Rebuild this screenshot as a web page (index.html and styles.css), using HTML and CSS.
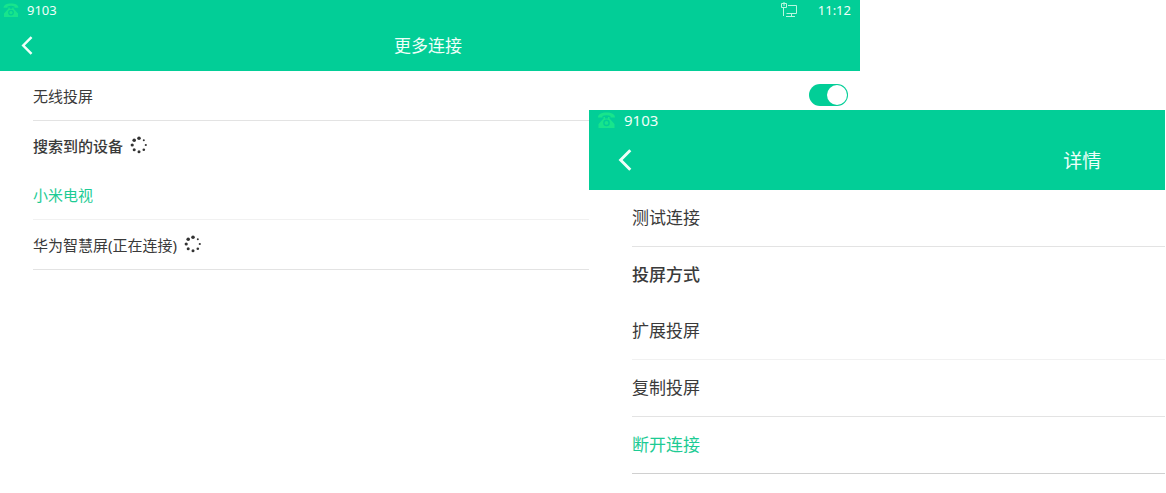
FILE: index.html
```html
<!DOCTYPE html>
<html lang="zh-CN">
<head>
<meta charset="utf-8">
<title>更多连接</title>
<link rel="stylesheet" href="styles.css">
</head>
<body>
<svg class="symbols" aria-hidden="true">
  <symbol id="phone" viewBox="0 0 18 16">
    <path fill="#18e48c" fill-rule="evenodd" d="M0.5 5.5C0.5 2 4 .5 9 .5s8.500 1.500 8.500 5h-4.500V4Q9 2.500 5 4v1.500zM6 5h1.500v1.500h3V5H12v1.500l5 5.500v4H1v-4l5-5.500zM9 7.600a3.300 3.300 0 1 0 0 6.600a3.300 3.300 0 1 0 0-6.600zM9 9a1.900 1.900 0 1 1 0 3.800a1.900 1.900 0 1 1 0-3.800z"/>
  </symbol>
  <symbol id="back" viewBox="0 0 14 22">
    <path fill="none" stroke="#effff9" stroke-width="2.900" d="M12.300 1.200 2.600 11l9.700 9.800"/>
  </symbol>
  <symbol id="spinner" viewBox="0 0 18 18">
    <g fill="#333">
      <circle cx="9" cy="2.200" r="1.800"/><circle cx="4.200" cy="4.200" r="1.800"/>
      <circle cx="2.200" cy="9" r="1.600"/><circle cx="4.200" cy="13.800" r="1.500"/>
      <circle cx="9" cy="15.800" r="1.500"/><circle cx="13.800" cy="13.800" r="1.300"/>
      <circle cx="15.800" cy="9" r="1.100"/><circle cx="13.800" cy="4.200" r="1"/>
    </g>
  </symbol>
</svg>
<main class="stage">
  <section class="screen screen-list">
    <header class="header">
      <div class="status">
        <svg class="phone"><use href="#phone"/></svg>
        <span>9103</span>
        <svg class="network" viewBox="0 0 17 16" fill="none" stroke="#b9f7df">
          <path d="M.5 1.500h5v4h-5zM3 0v4M7 3.500h8.500v8H5.500M2.500 6v8M10.500 11.500v3M5 14.500h9"/>
        </svg>
        <time>11:12</time>
      </div>
      <div class="bar">
        <button class="back" type="button" aria-label="返回"><svg><use href="#back"/></svg></button>
        <h1 class="title">更多连接</h1>
      </div>
    </header>
    <div class="rows">
      <div class="row">
        <label for="cast">无线投屏</label>
        <input class="switch" id="cast" type="checkbox" role="switch" checked>
      </div>
      <h2 class="row heading">搜索到的设备<svg class="spinner"><use href="#spinner"/></svg></h2>
      <button class="row accent light" type="button">小米电视</button>
      <button class="row" type="button">华为智慧屏(正在连接)<svg class="spinner"><use href="#spinner"/></svg></button>
    </div>
  </section>
  <section class="screen screen-detail">
    <header class="header">
      <div class="status">
        <svg class="phone"><use href="#phone"/></svg>
        <span>9103</span>
      </div>
      <div class="bar">
        <button class="back" type="button" aria-label="返回"><svg><use href="#back"/></svg></button>
        <h1 class="title">详情</h1>
      </div>
    </header>
    <div class="rows">
      <button class="row" type="button">测试连接</button>
      <h2 class="row heading">投屏方式</h2>
      <button class="row light" type="button">扩展投屏</button>
      <button class="row" type="button">复制投屏</button>
      <button class="row accent strong" type="button">断开连接</button>
    </div>
  </section>
</main>
</body>
</html>
```
FILE: styles.css
```css
* {
  box-sizing: border-box;
}

body {
  margin: 0;
  background: #fff;
  color: #3a3a3a;
  font-family: "Noto Sans", "Noto Sans CJK SC", sans-serif;
}

button {
  margin: 0;
  padding: 0;
  border: 0;
  background: none;
  color: inherit;
  font: inherit;
  text-align: left;
}

svg {
  display: block;
  flex: none;
}

.symbols {
  display: none;
}

.stage {
  display: grid;
  grid-template-columns: 589fr 271fr 305fr;
  align-items: start;
  padding-right: 1px;
}

.screen {
  grid-row: 1;
  min-width: 0;
  background: #fff;
}

.screen-list {
  grid-column: 1 / 3;
  font-size: 15px;
}

.screen-detail {
  grid-column: 2 / 4;
  margin-top: 110px;
  overflow: hidden;
  font-size: 17px;
}

.header {
  background: #02ce97;
  color: #effff9;
}

.status {
  display: flex;
  align-items: center;
  height: 20px;
  padding: 0 9px 0 3px;
  font-size: 13px;
}

.status .phone {
  width: 16px;
  height: 14px;
  margin-right: 8px;
}

.network {
  width: 17px;
  height: 16px;
  margin: 0 20px 0 auto;
}

.bar {
  display: grid;
  align-items: center;
  height: 51px;
}

.back,
.title {
  grid-area: 1 / 1;
}

.back {
  justify-self: start;
  margin-left: 21px;
}

.back svg {
  width: 12px;
  height: 19px;
}

.title {
  margin: 0;
  padding: 0 4px 2px 0;
  font-size: 17px;
  font-weight: 400;
  text-align: center;
}

.rows {
  padding-left: 33px;
}

.row {
  display: flex;
  align-items: center;
  width: 100%;
  height: 50px;
  margin: 0;
  padding-bottom: 1px;
  border-bottom: 1px solid #e3e3e3;
  font-size: inherit;
  font-weight: 400;
}

.row.heading {
  height: 49px;
  border-bottom: 0;
  font-weight: 500;
}

.light {
  border-bottom-color: #f1f1f1;
}

.accent {
  color: #1dcb94;
}

.strong {
  border-bottom-color: #d0d0d0;
}

.spinner {
  width: 18px;
  height: 18px;
  margin-left: 7px;
}

.switch {
  display: flex;
  justify-content: flex-end;
  appearance: none;
  width: 39px;
  height: 22px;
  margin: 0 12px 0 auto;
  padding: 1px;
  border-radius: 11px;
  background: #02ce97;
}

.switch::before {
  content: "";
  width: 20px;
  height: 20px;
  border-radius: 50%;
  background: #fff;
}

.screen-detail .status {
  height: 20px;
  padding-left: 8px;
  font-size: 15px;
}

.screen-detail .phone {
  width: 19px;
  height: 16px;
}

.screen-detail .bar {
  height: 60px;
}

.screen-detail .back {
  margin-left: 29px;
}

.screen-detail .back svg {
  width: 14px;
  height: 22px;
}

.screen-detail .title {
  width: 172%;
  padding-bottom: 0;
  font-size: 19px;
}

.screen-detail .rows {
  padding-left: 43px;
}

.screen-detail .row {
  height: 57px;
  padding-bottom: 3px;
}

.screen-detail .heading {
  height: 56px;
}
```
